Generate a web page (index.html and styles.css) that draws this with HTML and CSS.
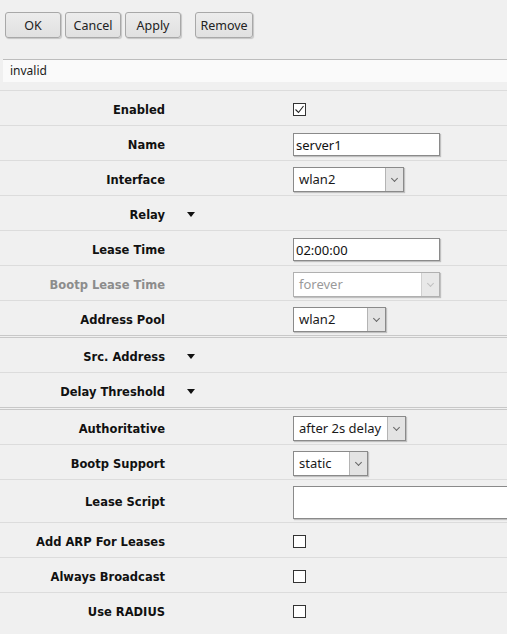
FILE: index.html
```html
<!DOCTYPE html>
<html lang="en">
<head>
    <meta charset="UTF-8">
    <meta name="viewport" content="width=device-width, initial-scale=1.0">
    <title>DHCP Server &lt;server1&gt;</title>
    <link rel="stylesheet" href="styles.css">
</head>
<body>
    <div class="toolbar">
        <button class="btn">OK</button>
        <button class="btn">Cancel</button>
        <button class="btn">Apply</button>
        <button class="btn btn-gap">Remove</button>
    </div>
    <div class="status">invalid</div>

    <div class="form">
        <div class="section">
            <div class="row">
                <label>Enabled</label><span></span>
                <span class="check checked">
                    <svg width="11" height="11" viewBox="0 0 11 11"><polyline points="1.5,5.5 4.5,8.5 9.5,2" fill="none" stroke="#222" stroke-width="1.1"/></svg>
                </span>
            </div>
            <div class="row">
                <label>Name</label><span></span>
                <input class="field" type="text" value="server1">
            </div>
            <div class="row">
                <label>Interface</label><span></span>
                <div class="select w-111"><span>wlan2</span><i class="arrow"></i></div>
            </div>
            <div class="row">
                <label>Relay</label><span class="toggle"></span>
            </div>
            <div class="row">
                <label>Lease Time</label><span></span>
                <input class="field" type="text" value="02:00:00">
            </div>
            <div class="row disabled">
                <label>Bootp Lease Time</label><span></span>
                <div class="select w-147"><span>forever</span><i class="arrow"></i></div>
            </div>
            <div class="row">
                <label>Address Pool</label><span></span>
                <div class="select w-93"><span>wlan2</span><i class="arrow"></i></div>
            </div>
        </div>

        <div class="section">
            <div class="row">
                <label>Src. Address</label><span class="toggle"></span>
            </div>
            <div class="row">
                <label>Delay Threshold</label><span class="toggle"></span>
            </div>
        </div>

        <div class="section">
            <div class="row">
                <label>Authoritative</label><span></span>
                <div class="select w-113"><span>after 2s delay</span><i class="arrow"></i></div>
            </div>
            <div class="row">
                <label>Bootp Support</label><span></span>
                <div class="select w-75"><span>static</span><i class="arrow"></i></div>
            </div>
            <div class="row tall">
                <label>Lease Script</label><span></span>
                <textarea class="script"></textarea>
            </div>
            <div class="row">
                <label>Add ARP For Leases</label><span></span>
                <span class="check"></span>
            </div>
            <div class="row">
                <label>Always Broadcast</label><span></span>
                <span class="check"></span>
            </div>
            <div class="row">
                <label>Use RADIUS</label><span></span>
                <span class="check"></span>
            </div>
        </div>
    </div>
</body>
</html>
```

FILE: styles.css
```css
html, body {
    overflow: hidden;
}
body {
    margin: 0;
    background: #f0f0f0;
    font-family: "Noto Sans", sans-serif;
    color: #1a1a1a;
}
.toolbar {
    display: flex;
    gap: 4px;
    padding: 12px 0 0 5px;
    height: 26px;
}
.btn {
    width: 56px;
    height: 26px;
    padding: 0;
    font-family: "Noto Sans", sans-serif;
    font-size: 12.5px;
    color: #222;
    background: linear-gradient(#ececec, #e0e0e0);
    border: 1px solid #a8a8a8;
    border-radius: 3px;
    box-shadow: 1px 1px 1px rgba(0, 0, 0, 0.18);
}
.btn-gap {
    width: 58px;
    margin-left: 10px;
}
.status {
    margin: 21px 0 0 3px;
    height: 22px;
    padding-left: 7px;
    line-height: 22px;
    font-size: 12px;
    background: #fafafa;
    border-top: 1px solid #bdbdbd;
    border-bottom: 8px solid #f0f0f0;
}
.form {
    border-top: 1px solid #dcdcdc;
    overflow: hidden;
}
.section {
    border-bottom: 3px double #c8c8c8;
}
.section:last-child {
    border-bottom: none;
}
.row {
    display: grid;
    grid-template-columns: 165px 128px 1fr;
    align-items: center;
    box-sizing: border-box;
    height: 35px;
    padding-top: 3px;
    border-bottom: 1px solid #dcdcdc;
}
.section .row:last-child {
    height: 34px;
    border-bottom: none;
}
.row.tall {
    height: 43px;
    padding-top: 2px;
}
.row label {
    text-align: right;
    font-family: "DejaVu Sans", sans-serif;
    font-size: 11.5px;
    font-weight: bold;
    color: #111;
}
.row.disabled label {
    color: #8c8c8c;
}
.toggle {
    margin-left: 22px;
    width: 0;
    height: 0;
    border-left: 4px solid transparent;
    border-right: 4px solid transparent;
    border-top: 5px solid #111;
}
.field {
    box-sizing: border-box;
    width: 147px;
    height: 23px;
    margin: 0;
    padding: 0 2px;
    font-family: "Noto Sans", sans-serif;
    font-size: 13px;
    color: #111;
    background: #fff;
    border: 1px solid #8a8a8a;
    box-shadow: 1px 1px 1px rgba(0, 0, 0, 0.2);
    outline: none;
}
.select {
    box-sizing: border-box;
    display: flex;
    align-items: stretch;
    height: 25px;
    background: #fff;
    border: 1px solid #8a8a8a;
    box-shadow: 1px 1px 1px rgba(0, 0, 0, 0.2);
    font-size: 13px;
}
.select span {
    flex: 1;
    padding-left: 5px;
    line-height: 23px;
    white-space: nowrap;
    overflow: hidden;
}
.select .arrow {
    width: 17px;
    background: #e3e3e3;
    border-left: 1px solid #b4b4b4;
    position: relative;
}
.select .arrow::after {
    content: "";
    position: absolute;
    left: 6px;
    top: 8px;
    width: 4px;
    height: 4px;
    border-right: 1px solid #666;
    border-bottom: 1px solid #666;
    transform: rotate(45deg);
}
.row.disabled .select {
    border-color: #b0b0b0;
    color: #9a9a9a;
}
.row.disabled .select .arrow {
    background: #e8e8e8;
    border-left-color: #d0d0d0;
}
.row.disabled .select .arrow::after {
    border-color: #c0c0c0;
}
.w-147 { width: 147px; }
.w-113 { width: 113px; }
.w-111 { width: 111px; }
.w-93 { width: 93px; }
.w-75 { width: 75px; }
.check {
    box-sizing: border-box;
    display: flex;
    align-items: center;
    justify-content: center;
    width: 13px;
    height: 13px;
    background: #fff;
    border: 1px solid #333;
}
.script {
    box-sizing: border-box;
    width: 240px;
    height: 33px;
    margin: 0;
    resize: none;
    background: #fff;
    border: 1px solid #8a8a8a;
    box-shadow: 1px 1px 1px rgba(0, 0, 0, 0.2);
}
```
